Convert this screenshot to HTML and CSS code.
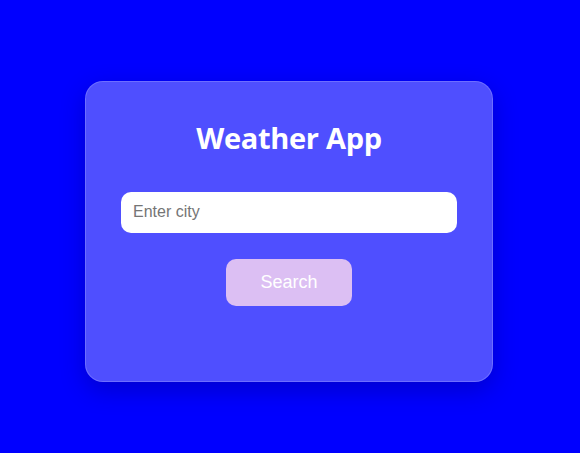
FILE: index.html
```html
<!DOCTYPE html>
<html lang="en">
<head>
<meta charset="utf-8">
<title>Weather App</title>
<link rel="stylesheet" href="styles.css">
</head>
<body>
<main class="card">
  <h1 class="title">Weather App</h1>
  <input class="city-input" type="text" placeholder="Enter city">
  <button class="search-btn" type="button">Search</button>
</main>
</body>
</html>
```

FILE: styles.css
```css
html, body {
  margin: 0;
  height: 100%;
}

body {
  background: #0000ff;
  display: flex;
  align-items: center;
  justify-content: center;
  font-family: "Liberation Sans", Arial, sans-serif;
}

.card {
  box-sizing: border-box;
  width: 408px;
  height: 301px;
  margin-top: 9px;
  margin-right: 2px;
  padding: 36px 35px;
  background: rgba(255, 255, 255, 0.31);
  border: 1px solid rgba(255, 255, 255, 0.18);
  border-radius: 18px;
  box-shadow: 0 8px 24px rgba(0, 0, 60, 0.25);
  display: flex;
  flex-direction: column;
  align-items: center;
}

.title {
  margin: 0 0 34px;
  font-family: "Open Sans", "Noto Sans", sans-serif;
  font-weight: 700;
  font-size: 29px;
  line-height: 40px;
  color: #ffffff;
  letter-spacing: -0.3px;
}

.city-input {
  box-sizing: border-box;
  width: 100%;
  height: 41px;
  flex-shrink: 0;
  padding: 0 12px;
  border: none;
  border-radius: 10px;
  background: #ffffff;
  font-family: "Liberation Sans", Arial, sans-serif;
  font-size: 16px;
  color: #333;
  outline: none;
}

.city-input::placeholder {
  color: #757575;
}

.search-btn {
  margin-top: 26px;
  width: 126px;
  height: 47px;
  flex-shrink: 0;
  border: none;
  border-radius: 10px;
  background: #dcbff3;
  color: #ffffff;
  font-family: "Liberation Sans", Arial, sans-serif;
  font-size: 18px;
  cursor: pointer;
}
```
